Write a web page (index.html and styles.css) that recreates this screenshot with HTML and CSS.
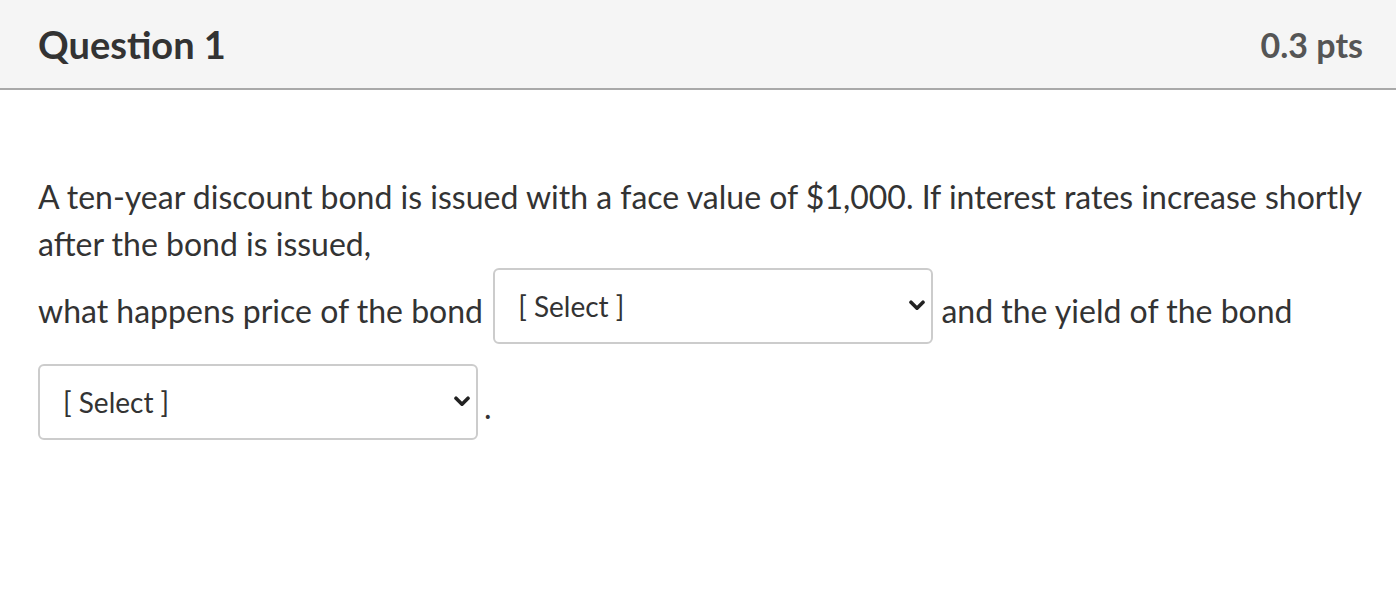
FILE: index.html
```html
<!DOCTYPE html>
<html lang="en">
<head>
<meta charset="utf-8">
<title>Question 1</title>
<link rel="stylesheet" href="styles.css">
</head>
<body>
<div class="question">
  <div class="q-header">
    <h2 class="q-title">Question 1</h2>
    <span class="q-points">0.3 pts</span>
  </div>
  <div class="q-body">
    <p class="q-text">A ten-year discount bond is issued with a face value of $1,000. If interest rates increase shortly after the bond is issued,</p>
    <p class="q-text q-blanks">what happens price of the bond <span class="select select-a"><span class="select-label">[ Select ]</span><svg class="chev" width="16" height="11" viewBox="0 0 16 11"><path d="M2 2.2 L8 8.2 L14 2.2" fill="none" stroke="#222" stroke-width="3.6" stroke-linecap="round" stroke-linejoin="round"/></svg></span> and the yield of the bond <span class="select select-b"><span class="select-label">[ Select ]</span><svg class="chev" width="16" height="11" viewBox="0 0 16 11"><path d="M2 2.2 L8 8.2 L14 2.2" fill="none" stroke="#222" stroke-width="3.6" stroke-linecap="round" stroke-linejoin="round"/></svg></span>.</p>
  </div>
</div>
</body>
</html>
```
FILE: styles.css
```css
html, body {
  margin: 0;
  padding: 0;
  background: #fff;
}
body {
  font-family: Lato, "Open Sans", sans-serif;
  color: #333;
}
.q-header {
  display: flex;
  justify-content: space-between;
  align-items: center;
  height: 88px;
  padding: 0 33px 0 38px;
  background: #f5f5f5;
  border-bottom: 2px solid #a9a9a9;
}
.q-title {
  margin: 0;
  font-size: 38px;
  font-weight: 700;
  color: #333;
}
.q-points {
  font-size: 34px;
  font-weight: 700;
  color: #555;
}
.q-body {
  padding: 83px 33px 0 38px;
}
.q-text {
  margin: 0;
  font-size: 32px;
  line-height: 47px;
}
.q-blanks {
  margin-top: -1px;
  line-height: 90px;
}
.select {
  display: inline-flex;
  align-items: center;
  justify-content: space-between;
  box-sizing: border-box;
  width: 440px;
  height: 76px;
  padding: 0 6px 0 23px;
  margin-bottom: 18px;
  border: 2px solid #ccc;
  border-radius: 6px;
  vertical-align: middle;
  line-height: normal;
  font-size: 28px;
  color: #333;
  background: #fff;
}
.select-a {
  margin-left: 2px;
}
.select-b {
  margin-right: 6px;
}
.chev {
  flex: none;
}
```
